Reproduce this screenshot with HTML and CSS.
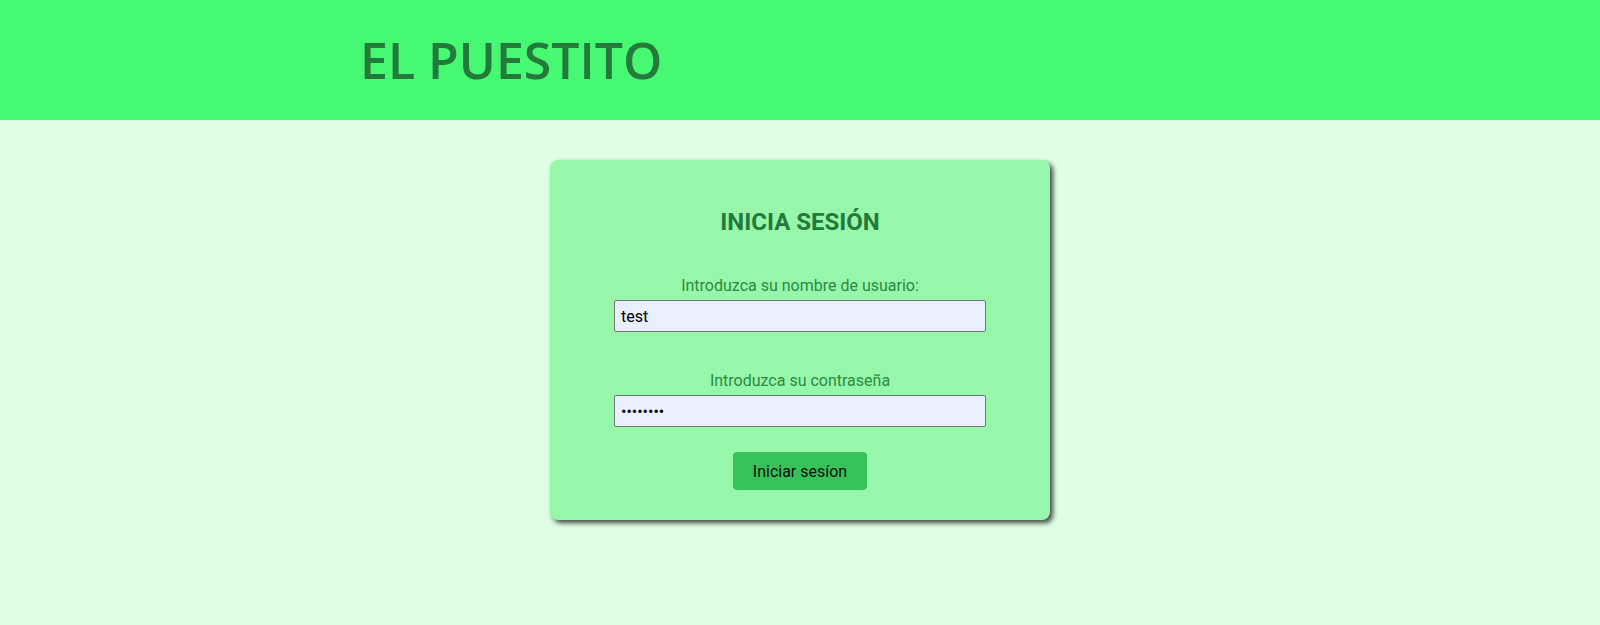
FILE: index.html
```html
<!DOCTYPE html>
<html lang="es">
<head>
<meta charset="utf-8">
<title>El Puestito</title>
<link rel="stylesheet" href="styles.css">
</head>
<body>
<header class="site-header">
  <h1 class="brand">EL PUESTITO</h1>
</header>
<main class="main">
  <form class="login-card">
    <h2 class="login-title">INICIA SESIÓN</h2>
    <div class="field">
      <label class="field-label" for="user">Introduzca su nombre de usuario:</label>
      <input class="field-input" id="user" type="text" value="test">
    </div>
    <div class="field field-second">
      <label class="field-label" for="pass">Introduzca su contraseña</label>
      <input class="field-input" id="pass" type="password" value="12345678">
    </div>
    <button class="login-btn" type="button">Iniciar sesíon</button>
  </form>
</main>
</body>
</html>
```
FILE: styles.css
```css
* { box-sizing: border-box; }
html, body { margin: 0; padding: 0; }
body {
  background: #dffee4;
  font-family: Roboto, "Liberation Sans", sans-serif;
  min-height: 625px;
}
.site-header {
  background: #47f872;
  height: 120px;
  display: flex;
  align-items: center;
  padding-left: 360px;
}
.brand {
  margin: 0;
  font-family: "Open Sans", sans-serif;
  font-weight: 600;
  font-size: 50px;
  line-height: 1;
  color: #237a3b;
  letter-spacing: 0;
}
.main {
  display: flex;
  justify-content: center;
  padding-top: 40px;
}
.login-card {
  width: 500px;
  height: 360px;
  background: #96f7aa;
  border-radius: 8px;
  box-shadow: 3px 3px 5px rgba(40, 40, 40, 0.85);
  display: flex;
  flex-direction: column;
  align-items: center;
  padding-top: 48px;
}
.login-title {
  margin: 0;
  font-size: 24px;
  font-weight: 700;
  line-height: 28px;
  color: #237a3b;
}
.field {
  display: flex;
  flex-direction: column;
  align-items: center;
  margin-top: 40px;
}
.field-second { margin-top: 39px; }
.field-label {
  font-size: 16px;
  line-height: 19px;
  color: #2b8a43;
  margin-bottom: 5px;
}
.field-input {
  width: 372px;
  height: 32px;
  background: #e8f0fe;
  border: 1px solid #767676;
  border-radius: 2px;
  padding: 0 6px;
  font-family: Roboto, "Liberation Sans", sans-serif;
  font-size: 16px;
  color: #000;
  outline: none;
}
.login-btn {
  margin-top: 25px;
  width: 134px;
  height: 38px;
  background: #37c25a;
  border: none;
  border-radius: 4px;
  font-family: Roboto, "Liberation Sans", sans-serif;
  font-size: 16px;
  color: #111;
  cursor: pointer;
}
```
